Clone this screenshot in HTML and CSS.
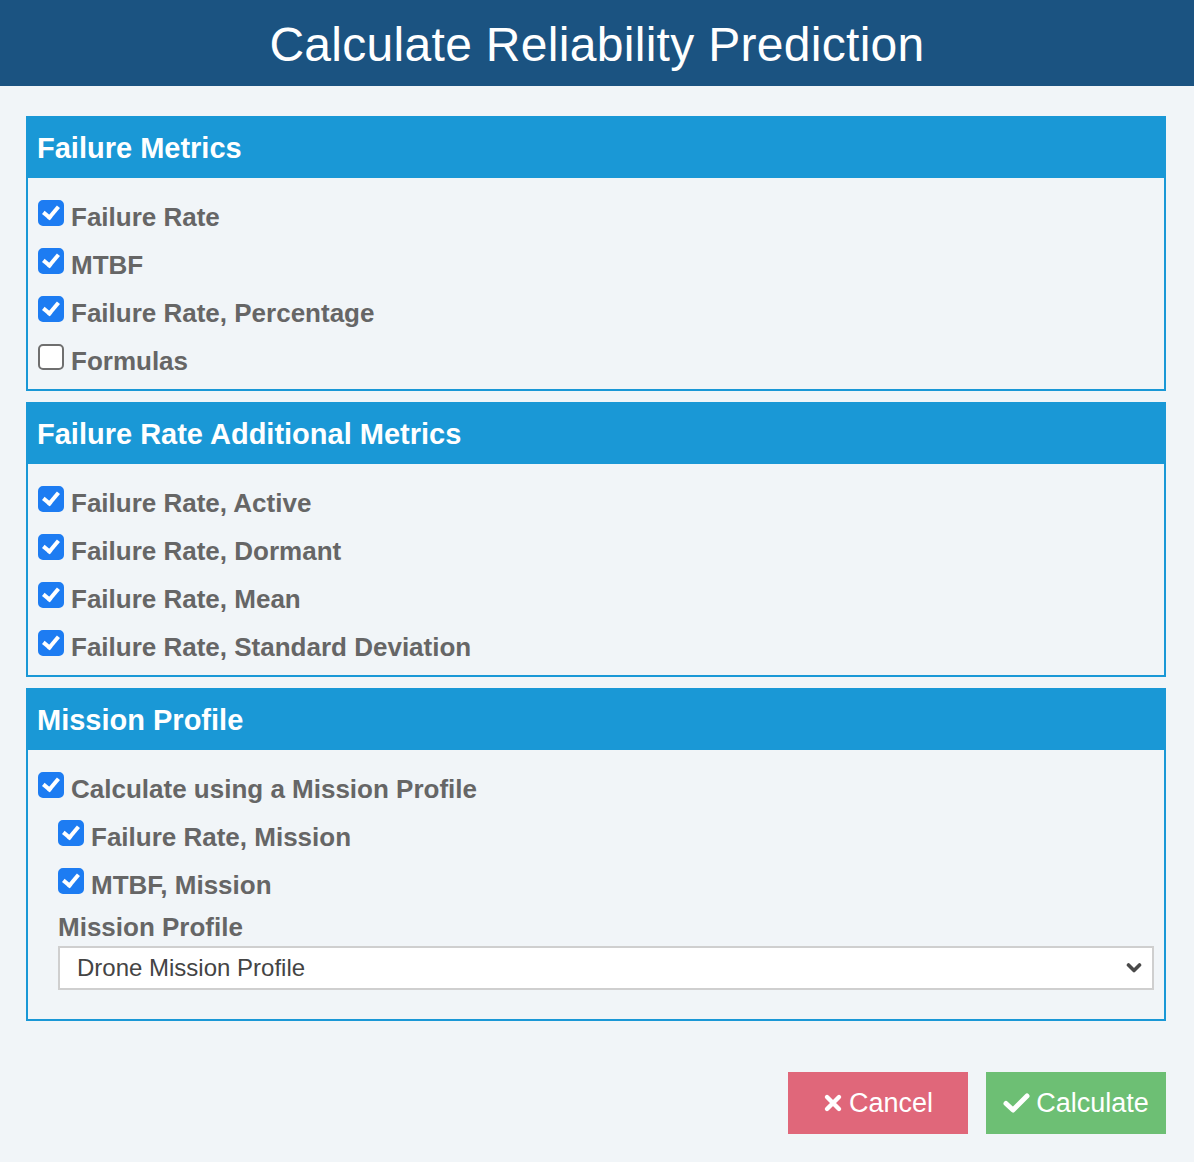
FILE: index.html
```html
<!DOCTYPE html>
<html>
<head>
<meta charset="utf-8">
<link rel="stylesheet" href="styles.css">
</head>
<body>
<header class="top">
  <h1 class="title">Calculate Reliability Prediction</h1>
</header>
<main class="content">
  <section class="panel">
    <div class="panel-head">Failure Metrics</div>
    <div class="panel-body">
      <label class="row"><span class="cb on"></span>Failure Rate</label>
      <label class="row"><span class="cb on"></span>MTBF</label>
      <label class="row"><span class="cb on"></span>Failure Rate, Percentage</label>
      <label class="row"><span class="cb"></span>Formulas</label>
    </div>
  </section>
  <section class="panel">
    <div class="panel-head">Failure Rate Additional Metrics</div>
    <div class="panel-body">
      <label class="row"><span class="cb on"></span>Failure Rate, Active</label>
      <label class="row"><span class="cb on"></span>Failure Rate, Dormant</label>
      <label class="row"><span class="cb on"></span>Failure Rate, Mean</label>
      <label class="row"><span class="cb on"></span>Failure Rate, Standard Deviation</label>
    </div>
  </section>
  <section class="panel">
    <div class="panel-head">Mission Profile</div>
    <div class="panel-body mission">
      <label class="row"><span class="cb on"></span>Calculate using a Mission Profile</label>
      <div class="sub">
        <label class="row"><span class="cb on"></span>Failure Rate, Mission</label>
        <label class="row"><span class="cb on"></span>MTBF, Mission</label>
        <div class="field-label">Mission Profile</div>
        <div class="select">
          <span>Drone Mission Profile</span>
          <svg class="chev" width="16" height="12" viewBox="0 0 16 12"><path d="M2.5 3 L8 8.5 L13.5 3" fill="none" stroke="#4a4a4a" stroke-width="3.6" stroke-linecap="round" stroke-linejoin="round"/></svg>
        </div>
      </div>
    </div>
  </section>
  <div class="actions">
    <button class="btn cancel"><svg width="20" height="20" viewBox="0 0 20 20"><path d="M4 4 L16 16 M16 4 L4 16" stroke="#fff" stroke-width="4.4" stroke-linecap="round"/></svg>Cancel</button>
    <button class="btn calc"><svg width="27" height="22" viewBox="0 0 27 22"><path d="M3 11.5 L10 18 L24 4" fill="none" stroke="#fff" stroke-width="5" stroke-linecap="round" stroke-linejoin="round"/></svg>Calculate</button>
  </div>
</main>
</body>
</html>
```
FILE: styles.css
```css
html, body {
  margin: 0;
  padding: 0;
}
body {
  background: #f1f5f8;
  font-family: "Liberation Sans", Arial, sans-serif;
  width: 1194px;
  height: 1162px;
  overflow: hidden;
}
.top {
  background: #1b5381;
  height: 86px;
  display: flex;
  align-items: center;
  justify-content: center;
}
.title {
  margin: 0;
  color: #fff;
  font-weight: 400;
  font-size: 48px;
  line-height: 1;
  padding-top: 4px;
  letter-spacing: 0.3px;
}
.content {
  padding: 30px 28px 0 26px;
}
.panel {
  margin-bottom: 11px;
}
.panel-head {
  background: #1a98d6;
  color: #fff;
  font-weight: 700;
  font-size: 29px;
  height: 62px;
  display: flex;
  align-items: center;
  padding-left: 11px;
  padding-top: 2px;
  box-sizing: border-box;
}
.panel-body {
  border: 2px solid #1a98d6;
  border-top: none;
  padding: 15px 10px 4px 10px;
}
.row {
  display: flex;
  align-items: center;
  height: 48px;
  color: #666;
  font-weight: 700;
  font-size: 26px;
}
.cb {
  width: 26px;
  height: 26px;
  box-sizing: border-box;
  border: 2px solid #6f6f6f;
  border-radius: 5px;
  background: #fff;
  margin-right: 7px;
  margin-top: -8px;
  flex: none;
  position: relative;
}
.cb.on {
  background: #1d7cf2;
  border-color: #1d7cf2;
}
.cb.on::after {
  content: "";
  position: absolute;
  left: 6px;
  top: 1px;
  width: 6px;
  height: 12px;
  border: solid #fff;
  border-width: 0 4px 4px 0;
  transform: rotate(40deg);
}
.mission {
  padding-bottom: 29px;
}
.sub {
  padding-left: 20px;
}
.field-label {
  color: #666;
  font-weight: 700;
  font-size: 26px;
  height: 36px;
  display: flex;
  align-items: center;
}
.select {
  margin-top: 1px;
  height: 44px;
  box-sizing: border-box;
  border: 2px solid #cfcfcf;
  background: #fff;
  display: flex;
  align-items: center;
  justify-content: space-between;
  padding: 0 10px 0 17px;
  font-size: 24px;
  color: #444;
}
.chev {
  display: block;
}
.actions {
  display: flex;
  justify-content: flex-end;
  gap: 18px;
  margin-top: 51px;
}
.btn {
  width: 180px;
  height: 62px;
  border: none;
  color: #fff;
  font-family: "Liberation Sans", Arial, sans-serif;
  font-size: 27px;
  display: flex;
  align-items: center;
  justify-content: center;
  gap: 6px;
  padding: 0;
}
.btn svg {
  display: block;
}
.cancel {
  background: #e0677a;
}
.calc {
  background: #6dbf74;
}
```
